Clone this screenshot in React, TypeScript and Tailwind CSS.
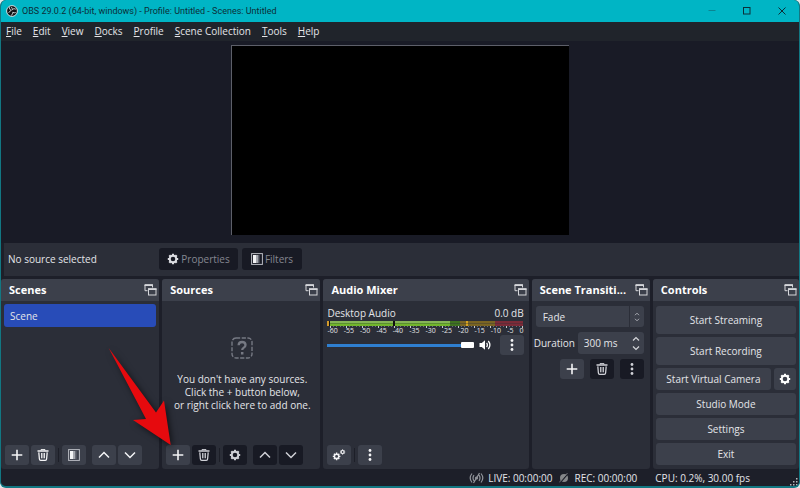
import React from "react";

type IconProps = { className?: string };

const PlusIcon = () => (
  <svg className="size-3" viewBox="0 0 12 12" stroke="currentColor" strokeWidth="1.6" fill="none">
    <path d="M6 .7v10.6M.7 6h10.6" />
  </svg>
);
const TrashIcon = () => (
  <svg className="size-3" viewBox="0 0 12 12" stroke="currentColor" fill="none">
    <path d="M.5 1.9h11" strokeWidth="1.5" />
    <path d="M4 1.6V.6h4v1" strokeWidth="1" />
    <path d="M1.8 3.4l.6 6.6q.1 1.3 1.3 1.3h4.6q1.2 0 1.3-1.3l.6-6.6" strokeWidth="1.3" />
    <path d="M4.5 4v5.3M6 4v5.3M7.5 4v5.3" strokeWidth=".9" />
  </svg>
);
const FilterIcon = () => (
  <svg className="size-3" viewBox="0 0 12 12">
    <rect x=".6" y=".6" width="10.8" height="10.8" fill="none" stroke="#b9bbc2" strokeWidth="1" />
    <rect x="2" y="2" width="3" height="8" fill="#f2f2f4" />
    <rect x="5" y="2" width="2" height="8" fill="#a5a7ae" />
    <rect x="7" y="2" width="1.5" height="8" fill="#666974" />
  </svg>
);
const UpIcon = () => (
  <svg className="size-3" viewBox="0 0 12 12" stroke="currentColor" strokeWidth="1.5" fill="none">
    <path d="M1 8.5l5-5 5 5" />
  </svg>
);
const DownIcon = () => (
  <svg className="size-3" viewBox="0 0 12 12" stroke="currentColor" strokeWidth="1.5" fill="none">
    <path d="M1 3.5l5 5 5-5" />
  </svg>
);
const DotsIcon = () => (
  <svg className="size-3" viewBox="0 0 12 12" fill="currentColor">
    <circle cx="6" cy="1.5" r="1.4" />
    <circle cx="6" cy="6" r="1.4" />
    <circle cx="6" cy="10.5" r="1.4" />
  </svg>
);
const GearIcon = ({ className = "size-3" }: IconProps) => (
  <svg className={className} viewBox="0 0 12 12" fill="none" stroke="currentColor">
    <circle cx="6" cy="6" r="3.3" strokeWidth="2" />
    <path
      d="M6 .8v2M6 9.2v2M.8 6h2M9.2 6h2M2.3 2.3l1.4 1.4M8.3 8.3l1.4 1.4M2.3 9.7l1.4-1.4M8.3 3.7l1.4-1.4"
      strokeWidth="2.2"
    />
  </svg>
);
const GearsIcon = () => (
  <svg className="h-3 w-3.5" viewBox="0 0 14 12" fill="none" stroke="currentColor">
    <circle cx="4.6" cy="7.4" r="2.2" strokeWidth="1.5" />
    <path
      d="M4.6 3.6v1.6M4.6 9.6v1.6M.8 7.4h1.6M6.8 7.4h1.6M1.9 4.7l1.2 1.2M6.1 8.9l1.2 1.2M1.9 10.1l1.2-1.2M6.1 5.9l1.2-1.2"
      strokeWidth="1.4"
    />
    <circle cx="10.6" cy="3" r="1.5" strokeWidth="1.2" />
    <path d="M10.6.4v.9M10.6 4.7v.9M8 3h.9M12.3 3h.9M8.8 1.2l.6.6M11.8 4.2l.6.6M8.8 4.8l.6-.6M11.8 1.8l.6-.6" />
  </svg>
);
const PopoutIcon = () => (
  <svg className="h-3 w-[13px] shrink-0" viewBox="0 0 13 12" fill="none" stroke="#d5d6da">
    <path d="M3.5 6.7H1V1h7.5v2.5" strokeWidth="1" />
    <path d="M.5 1.2H9" strokeWidth="1.8" />
    <rect x="4.5" y="5" width="7.5" height="6" strokeWidth="1" />
    <path d="M4 5.2h8.5" strokeWidth="1.8" />
  </svg>
);
const SpeakerIcon = () => (
  <svg className="h-3 w-[13px]" viewBox="0 0 13 12" fill="none" stroke="#fff" strokeWidth="1.3">
    <path d="M.5 4h2.3L6 1.2v9.6L2.8 8H.5z" fill="#fff" stroke="none" />
    <path d="M7.6 3.9q1.5 2.1 0 4.2M9.3 2q3.2 4 0 8" />
  </svg>
);

const variants = {
  light: "bg-[#3c404b] text-[#f4f4f6]",
  dark: "bg-[#181a24] text-[#cfd0d6]",
};

function ToolButton({
  label,
  variant = "light",
  children,
}: {
  label: string;
  variant?: keyof typeof variants;
  children: React.ReactNode;
}) {
  return (
    <button
      aria-label={label}
      className={`flex h-5 w-6 shrink-0 items-center justify-center rounded-[3px] ${variants[variant]}`}
    >
      {children}
    </button>
  );
}

const Separator = () => <span className="mx-px h-3.5 w-px bg-[#1d1f28]" />;

function Dock({ title, className, children }: { title: string; className: string; children: React.ReactNode }) {
  return (
    <section className={`flex min-w-0 flex-col overflow-hidden rounded-[3px] bg-[#2b2e38] ${className}`}>
      <header className="flex h-[22px] shrink-0 items-center justify-between bg-[#3c404b] pr-0.5 pl-2">
        <h2 className="text-[11px] font-bold whitespace-nowrap text-white">{title}</h2>
        <button aria-label={`Pop out ${title}`}>
          <PopoutIcon />
        </button>
      </header>
      {children}
    </section>
  );
}

function Meter() {
  return (
    <svg className="mt-px block h-[7px] w-full" viewBox="0 0 196 7" preserveAspectRatio="none" shapeRendering="crispEdges">
      <rect width="123" height="2" fill="#86b556" />
      <rect y="2" width="123" height="1" fill="#5b8f30" />
      <rect y="3" width="123" height="2" fill="#72b52c" />
      <rect x="123" width="10" height="5" fill="#3f7220" />
      <rect x="133" width="35" height="5" fill="#7a6423" />
      <rect x="168" width="28" height="5" fill="#7b2b38" />
      <rect width="2" height="5" fill="#d39a2c" />
      <rect x="2" width="1" height="5" fill="#101010" />
      <rect x="66" width="2" height="5" fill="#101010" />
      <rect x="139" width="2" height="5" fill="#d6a021" />
      <rect x="123" y="2" width="73" height="1" fill="#2b2e38" opacity=".35" />
      {Array.from({ length: 61 }, (_, i) => (
        <rect
          key={i}
          x={Math.round(3 + i * 3.2)}
          y="5"
          width="1"
          height={i % 5 === 0 ? 2 : 1}
          fill={i % 5 === 0 ? "#c8cace" : "#6c6f78"}
        />
      ))}
    </svg>
  );
}

const menus = ["File", "Edit", "View", "Docks", "Profile", "Scene Collection", "Tools", "Help"];
const scale = [-60, -55, -50, -45, -40, -35, -30, -25, -20, -15, -10, -5, 0];
const control = "flex w-full items-center justify-center rounded-[3px] bg-[#3c404b]";

export default function App() {
  return (
    <div className="h-screen bg-[#dfe9ea] font-['Open_Sans','Noto_Sans',sans-serif] text-[10px] leading-[14px] text-[#e4e5e9]">
      <div className="relative flex h-full flex-col overflow-hidden rounded-md border-x border-b-2 border-[#127782] bg-[#1d1f29]">
        <div className="flex h-[22px] shrink-0 items-center bg-[#00b5c5] pl-[5px] text-[#0c2f38]">
          <svg className="mr-1 size-3" viewBox="0 0 12 12">
            <circle cx="6" cy="6" r="5.4" fill="#111114" stroke="#e6ecee" strokeWidth=".9" />
            <path
              d="M3.5 2.2q-.6 2.4 1.8 3.2M9.8 4.2q-2-1.4-3.6.6M5 10.3q2.4-.7 1.8-3.1M5.3 5.4q-1.8.6-2.6 2.4M6.2 4.8q.3-1.6-.8-2.8M6.8 7.2q1.4.9 3 .4"
              fill="none"
              stroke="#d7dcde"
              strokeWidth=".9"
            />
          </svg>
          <h1 className="flex-1 font-[Roboto,sans-serif] text-[9px]">
            OBS 29.0.2 (64-bit, windows) - Profile: Untitled - Scenes: Untitled
          </h1>
          <div className="flex h-full">
            <button aria-label="Minimize" className="flex w-[35px] items-center justify-center">
              <svg className="size-2" viewBox="0 0 8 8" stroke="#0a8592"><path d="M.5 3.5h7" /></svg>
            </button>
            <button aria-label="Maximize" className="flex w-[35px] items-center justify-center">
              <svg className="size-2" viewBox="0 0 8 8" fill="none" stroke="currentColor"><rect x=".5" y=".5" width="6.5" height="6.5" /></svg>
            </button>
            <button aria-label="Close" className="flex w-[35px] items-center justify-center">
              <svg className="size-2" viewBox="0 0 8 8" stroke="currentColor"><path d="M.5.5l7 7M7.5.5l-7 7" /></svg>
            </button>
          </div>
        </div>

        <nav className="flex h-[19px] shrink-0 items-center gap-[11px] bg-[#20242b] pb-0.5 pl-[5px]">
          {menus.map((m) => (
            <button key={m}>
              <span className="underline">{m[0]}</span>
              {m.slice(1)}
            </button>
          ))}
        </nav>

        <main className="flex min-h-0 flex-1 justify-center bg-[#191b26] pt-1 pb-2">
          <div className="aspect-video h-full border-t border-l border-[#5d5f69] bg-black" />
        </main>

        <div className="ml-[3px] flex h-[33px] shrink-0 items-center bg-[#2b2e38] pb-px pl-1">
          <p className="w-[151px]">No source selected</p>
          <button className="mr-1 flex h-[22px] w-[79px] items-center justify-center gap-0.5 rounded-[3px] bg-[#181a24] text-[#858791]">
            <GearIcon className="size-3 text-[#dcdde2]" />
            Properties
          </button>
          <button className="flex h-[22px] w-[60px] items-center justify-center gap-0.5 rounded-[3px] bg-[#181a24] text-[#858791]">
            <FilterIcon />
            Filters
          </button>
        </div>

        <div className="flex h-[193px] shrink-0 gap-[3px] pt-[3px]">
          <Dock title="Scenes" className="flex-[158]">
            <ul className="flex-1 p-[3px]">
              <li className="flex h-[23px] items-center rounded-[3px] bg-[#284cb8] pl-1.5">Scene</li>
            </ul>
            <div className="flex items-center gap-0.5 p-1">
              <ToolButton label="Add scene"><PlusIcon /></ToolButton>
              <ToolButton label="Remove scene"><TrashIcon /></ToolButton>
              <Separator />
              <ToolButton label="Scene filters"><FilterIcon /></ToolButton>
              <span className="w-0.5" />
              <ToolButton label="Move scene up"><UpIcon /></ToolButton>
              <ToolButton label="Move scene down"><DownIcon /></ToolButton>
            </div>
          </Dock>

          <Dock title="Sources" className="flex-[158]">
            <div className="flex flex-1 flex-col items-center justify-center gap-3.5 pt-1.5 pl-0.5 text-center leading-[13px]">
              <svg className="size-[22px]" viewBox="0 0 22 22" fill="none" stroke="#767983">
                <rect x="1" y="1" width="20" height="20" rx="4" strokeWidth="1.4" strokeDasharray="4.2 1.5" />
                <path d="M7.6 8.3q.2-3.3 3.5-3.3t3.4 2.9q0 1.6-1.7 2.7-1.6 1-1.6 2.5" strokeWidth="2.3" />
                <path d="M11.2 15v2.4" strokeWidth="2.5" />
              </svg>
              <p>
                You don't have any sources.
                <br />
                Click the + button below,
                <br />
                or right click here to add one.
              </p>
            </div>
            <div className="flex items-center gap-0.5 p-1">
              <ToolButton label="Add source"><PlusIcon /></ToolButton>
              <ToolButton label="Remove source" variant="dark"><TrashIcon /></ToolButton>
              <Separator />
              <ToolButton label="Source properties" variant="dark"><GearIcon /></ToolButton>
              <span className="w-0.5" />
              <ToolButton label="Move source up" variant="dark"><UpIcon /></ToolButton>
              <ToolButton label="Move source down" variant="dark"><DownIcon /></ToolButton>
            </div>
          </Dock>

          <Dock title="Audio Mixer" className="flex-[205]">
            <div className="flex-1 pt-[5px] pr-[5px] pl-1">
              <div className="flex justify-between">
                <label htmlFor="desktop-volume">Desktop Audio</label>
                <span>0.0 dB</span>
              </div>
              <Meter />
              <div className="flex justify-between text-[7px] leading-[6px]">
                {scale.map((n) => (
                  <span key={n}>{n}</span>
                ))}
              </div>
              <div className="mt-px flex items-center">
                <input
                  id="desktop-volume"
                  type="range"
                  defaultValue={100}
                  className="h-1.5 min-w-0 flex-1 appearance-none bg-[linear-gradient(#2f7fd0,#2f7fd0)] bg-[length:100%_3px] bg-center bg-no-repeat [&::-webkit-slider-thumb]:h-1.5 [&::-webkit-slider-thumb]:w-[13px] [&::-webkit-slider-thumb]:appearance-none [&::-webkit-slider-thumb]:rounded-[1px] [&::-webkit-slider-thumb]:bg-white"
                />
                <button aria-label="Mute" className="mr-2 ml-[5px]"><SpeakerIcon /></button>
                <ToolButton label="Desktop Audio options"><DotsIcon /></ToolButton>
              </div>
            </div>
            <div className="flex items-center gap-0.5 p-1">
              <ToolButton label="Advanced audio properties"><GearsIcon /></ToolButton>
              <Separator />
              <ToolButton label="Mixer menu"><DotsIcon /></ToolButton>
            </div>
          </Dock>

          <Dock title="Scene Transiti..." className="flex-[118]">
            <div className="flex flex-1 flex-col gap-[5px] py-[5px] pr-1.5 pl-0.5">
              <div className="relative ml-0.5 flex h-[21px] rounded-[3px] bg-[#3c404b]">
                <select aria-label="Transition" className="w-full appearance-none pl-[7px]">
                  <option>Fade</option>
                </select>
                <span className="pointer-events-none absolute inset-y-0 right-0 flex w-[15px] items-center justify-center border-l border-[#2b2e38]">
                  <svg className="h-2.5 w-1.5" viewBox="0 0 6 10" fill="none" stroke="#a9abb3"><path d="M1 3.2l2-2 2 2M1 6.8l2 2 2-2" /></svg>
                </span>
              </div>
              <div className="flex items-center justify-between">
                <label htmlFor="duration">Duration</label>
                <div className="flex h-[22px] w-[66px] rounded-[3px] bg-[#3c404b] pl-1.5">
                  <input id="duration" defaultValue="300 ms" className="min-w-0 flex-1 bg-transparent" />
                  <div className="flex w-4 flex-col items-center justify-around py-0.5">
                    <button aria-label="Increase duration"><svg className="block h-1.5 w-2" viewBox="0 0 8 6" fill="none" stroke="#d5d6da" strokeWidth="1.2"><path d="M1 4.5l3-3 3 3" /></svg></button>
                    <button aria-label="Decrease duration"><svg className="block h-1.5 w-2" viewBox="0 0 8 6" fill="none" stroke="#d5d6da" strokeWidth="1.2"><path d="M1 1.5l3 3 3-3" /></svg></button>
                  </div>
                </div>
              </div>
              <div className="flex justify-end gap-1.5">
                <ToolButton label="Add transition"><PlusIcon /></ToolButton>
                <ToolButton label="Remove transition" variant="dark"><TrashIcon /></ToolButton>
                <ToolButton label="Transition options" variant="dark"><DotsIcon /></ToolButton>
              </div>
            </div>
          </Dock>

          <Dock title="Controls" className="flex-[146]">
            <div className="flex flex-1 flex-col gap-[3px] px-[3px] pt-[5px] pb-[3px]">
              <button className={`${control} h-7`}>Start Streaming</button>
              <button className={`${control} h-7`}>Start Recording</button>
              <div className="flex gap-[3px]">
                <button className={`${control} h-[22px]`}>Start Virtual Camera</button>
                <button aria-label="Configure virtual camera" className="flex h-[22px] w-[22px] shrink-0 items-center justify-center rounded-[3px] bg-[#3c404b] text-white">
                  <GearIcon />
                </button>
              </div>
              <button className={`${control} h-[22px]`}>Studio Mode</button>
              <button className={`${control} h-[22px]`}>Settings</button>
              <button className={`${control} h-[22px]`}>Exit</button>
            </div>
          </Dock>
        </div>

        <footer className="flex h-[17px] shrink-0 items-center justify-end pr-px">
          <svg className="mr-1 h-3 w-[15px]" viewBox="0 0 15 12" fill="none" stroke="#92949b" strokeWidth="1.2">
            <path d="M3 1.5q-3.6 4.5 0 9M5 3.2q-2 2.8 0 5.6M12 1.5q3.6 4.5 0 9M10 3.2q2 2.8 0 5.6M4.5 11l6-10" />
            <circle cx="7.5" cy="6" r="1" />
          </svg>
          <span className="mr-1.5">LIVE: 00:00:00</span>
          <svg className="mr-1.5 size-2.5" viewBox="0 0 10 10">
            <circle cx="5" cy="5" r="4" fill="#85878a" />
            <path d="M1 10l8.5-10" stroke="#1d1f29" strokeWidth="1.2" />
            <path d="M.3 9.4L8.5 0" stroke="#85878a" strokeWidth=".8" />
          </svg>
          <span className="mr-[18px]">REC: 00:00:00</span>
          <span className="mr-10">CPU: 0.2%, 30.00 fps</span>
          <svg className="size-2 self-end" viewBox="0 0 8 8" fill="#b5b7bc">
            <path d="M6 0h1.5v1.5H6zM3 3h1.5v1.5H3zM6 3h1.5v1.5H6zM0 6h1.5v1.5H0zM3 6h1.5v1.5H3zM6 6h1.5v1.5H6z" />
          </svg>
        </footer>

        <svg
          className="pointer-events-none absolute bottom-[38px] left-[107px] h-[100px] w-[66px] overflow-visible drop-shadow-[2px_2px_3px_rgba(0,0,0,0.6)]"
          viewBox="0 0 66 100"
          fill="#e60a0e"
        >
          <path d="M.7 0L48 64.5 56 52.5 62.7 97 25 72 38 71z" />
        </svg>
      </div>
    </div>
  );
}
